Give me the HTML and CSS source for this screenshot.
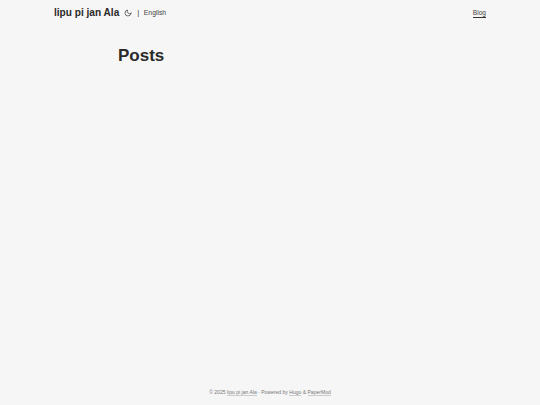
FILE: index.html
```html
<!DOCTYPE html>
<html lang="en">
<head>
<meta charset="utf-8">
<title>Posts</title>
<link rel="stylesheet" href="styles.css">
</head>
<body>
<header class="header">
  <nav class="nav">
    <div class="logo">
      <a class="site-name" href="#">lipu pi jan Ala</a>
      <button class="theme" aria-label="Toggle theme">
        <svg viewBox="0 0 24 24" width="8" height="8" fill="none" stroke="currentColor" stroke-width="2.2" stroke-linecap="round" stroke-linejoin="round"><path d="M21 12.79A9 9 0 1 1 11.21 3 7 7 0 0 0 21 12.79z"/></svg>
      </button>
      <span class="sep">|</span>
      <a class="lang" href="#">English</a>
    </div>
    <a class="menu-link" href="#">Blog</a>
  </nav>
</header>
<main class="main">
  <h1 class="title">Posts</h1>
</main>
<footer class="footer">
  <span>© 2025 <a href="#">lipu pi jan Ala</a> · Powered by <a href="#">Hugo</a> &amp; <a href="#">PaperMod</a></span>
</footer>
</body>
</html>
```
FILE: styles.css
```css
* { box-sizing: border-box; }
html, body { height: 100%; }
body {
  margin: 0;
  background: #f6f6f6;
  color: #2a2a2a;
  font-family: "Liberation Sans", Arial, sans-serif;
  display: flex;
  flex-direction: column;
  overflow: hidden;
}
a { color: inherit; text-decoration: none; }
.header { height: 25px; }
.nav {
  width: 432px;
  margin: 0 auto;
  height: 25px;
  display: flex;
  justify-content: space-between;
  align-items: center;
}
.logo { display: flex; align-items: center; }
.site-name { font-size: 10.1px; font-weight: 700; }
.theme {
  border: 0;
  padding: 0;
  margin-left: 5px;
  background: none;
  color: #444;
  display: flex;
}
.sep { font-size: 8px; margin-left: 5px; color: #444; }
.lang { font-size: 6.8px; margin-left: 4.5px; color: #444; }
.menu-link { font-size: 6.6px; color: #444; border-bottom: 1px solid #333; line-height: 8px; margin-top: 1px; }
.main { flex: 1; width: 304px; margin: 0 auto; padding-top: 20px; }
.title { margin: 0; font-size: 17px; line-height: 22px; font-weight: 700; }
.footer {
  height: 25px;
  text-align: center;
  font-size: 5.05px;
  color: #777;
  line-height: 24px;
}
.footer a { border-bottom: 1px solid #ccc; }
```
